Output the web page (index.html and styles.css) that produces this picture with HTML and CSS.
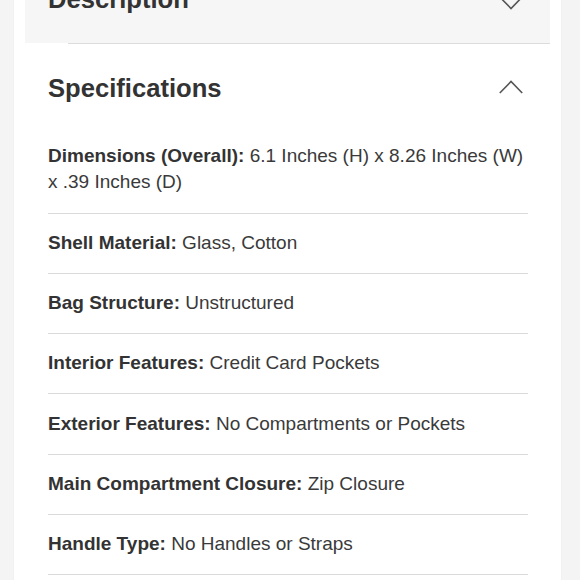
FILE: index.html
```html
<!DOCTYPE html>
<html lang="en">
<head>
<meta charset="utf-8">
<title>Specifications</title>
<link rel="stylesheet" href="styles.css">
</head>
<body>
<div class="page">
  <div class="card">
    <div class="desc-head">
      <h2 class="title">Description</h2>
      <svg class="chev" width="24" height="14" viewBox="0 0 24 14"><polyline points="0.8,1 12,12.5 23.2,1" fill="none" stroke="#555" stroke-width="1.6"/></svg>
    </div>
    <div class="sep"></div>
    <div class="spec">
      <div class="spec-head">
        <h2 class="title">Specifications</h2>
        <svg class="chev up" width="24" height="14" viewBox="0 0 24 14"><polyline points="0.8,13 12,1.5 23.2,13" fill="none" stroke="#555" stroke-width="1.6"/></svg>
      </div>
      <div class="row"><b>Dimensions (Overall):</b> 6.1 Inches (H) x 8.26 Inches (W) x .39 Inches (D)</div>
      <div class="row"><b>Shell Material:</b> Glass, Cotton</div>
      <div class="row"><b>Bag Structure:</b> Unstructured</div>
      <div class="row"><b>Interior Features:</b> Credit Card Pockets</div>
      <div class="row"><b>Exterior Features:</b> No Compartments or Pockets</div>
      <div class="row"><b>Main Compartment Closure:</b> Zip Closure</div>
      <div class="row"><b>Handle Type:</b> No Handles or Straps</div>
    </div>
  </div>
</div>
</body>
</html>
```
FILE: styles.css
```css
html, body {
  margin: 0;
  padding: 0;
  background: #f4f4f4;
  overflow: hidden;
  height: 580px;
}
body {
  font-family: "Liberation Sans", Arial, Helvetica, sans-serif;
  color: #333;
}
.page {
  margin-top: -44.7px;
}
.card {
  margin-left: 13.5px;
  width: 547.5px;
  background: #fff;
  box-shadow: 0 0 1px rgba(0,0,0,0.08);
  min-height: 700px;
}
.desc-head {
  margin: 0 11px;
  background: #f6f6f6;
  padding: 28.5px 27px 29.2px 23.5px;
  display: flex;
  justify-content: space-between;
  align-items: center;
}
.title {
  margin: 0;
  font-size: 25.6px;
  line-height: 30px;
  font-weight: bold;
  color: #333;
}
.chev {
  display: block;
}
.desc-head .chev {
  margin-top: 8px;
}
.sep {
  margin: 0 11px 0 54.5px;
  border-top: 1px solid #dcdcdc;
}
.spec {
  padding: 0 33px 0 34.5px;
}
.spec-head {
  padding: 28.5px 5px 24.8px 0;
  display: flex;
  justify-content: space-between;
  align-items: center;
}
.spec-head .chev {
  margin-top: -2px;
}
.row {
  padding: 16.2px 0 17.1px;
  font-size: 19px;
  line-height: 26px;
  color: #3a3a3a;
  border-bottom: 1px solid #dadada;
}
.row b {
  color: #333;
}
```
